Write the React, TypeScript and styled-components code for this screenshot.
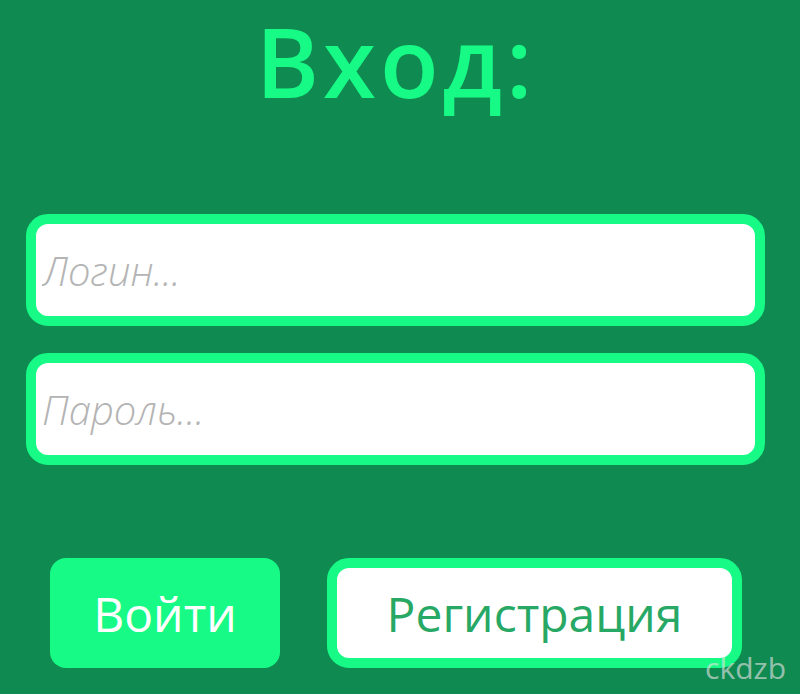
import React from "react";
import styled, { createGlobalStyle } from "styled-components";

const GlobalStyle = createGlobalStyle`
  html, body {
    margin: 0;
    padding: 0;
    background-color: #0f8a51;
  }
  body {
    font-family: "Open Sans", "Noto Sans", sans-serif;
  }
`;

const Page = styled.div`
  position: relative;
  width: 800px;
  height: 694px;
  background-color: #0f8a51;
  overflow: hidden;
`;

const Title = styled.h1`
  margin: -5px 0 0;
  padding: 0 8px 7px 0;
  text-align: center;
  font-size: 96px;
  font-weight: 600;
  line-height: 132px;
  letter-spacing: 4px;
  color: #17fb86;
`;

const Form = styled.form`
  display: flex;
  flex-direction: column;
  gap: 27px;
  width: 739px;
  margin: 80px 0 0 26px;
`;

const Field = styled.input`
  box-sizing: border-box;
  width: 100%;
  height: 112px;
  padding: 0 0 0 6px;
  border: 10px solid #17fb86;
  border-radius: 22px;
  background: #fff;
  font-family: "Open Sans", "Noto Sans", sans-serif;
  font-size: 40px;
  color: #333;
  outline: none;

  &::placeholder {
    color: #b4b4b4;
    font-style: italic;
    font-weight: 300;
  }
`;

const Buttons = styled.div`
  display: flex;
  gap: 47px;
  margin: 93px 0 0 50px;
`;

const Button = styled.button<{ $outline?: boolean }>`
  box-sizing: border-box;
  height: 110px;
  width: ${(p) => (p.$outline ? "415px" : "230px")};
  border: ${(p) => (p.$outline ? "10px solid #17fb86" : "none")};
  border-radius: ${(p) => (p.$outline ? "22px" : "16px")};
  background: ${(p) => (p.$outline ? "#fff" : "#17fb86")};
  color: ${(p) => (p.$outline ? "#27a865" : "#fff")};
  font-family: "Open Sans", "Noto Sans", sans-serif;
  font-size: 48px;
  padding: 0;
  cursor: pointer;
`;

const Watermark = styled.span`
  position: absolute;
  right: 14px;
  bottom: 6px;
  font-family: "Open Sans", "Noto Sans", sans-serif;
  font-size: 30px;
  color: rgba(225, 225, 225, 0.65);
`;

export default function App() {
  return (
    <Page>
      <GlobalStyle />
      <Title>Вход:</Title>
      <Form>
        <Field type="text" placeholder="Логин..." />
        <Field type="password" placeholder="Пароль..." />
      </Form>
      <Buttons>
        <Button type="button">Войти</Button>
        <Button type="button" $outline>
          Регистрация
        </Button>
      </Buttons>
      <Watermark>ckdzb</Watermark>
    </Page>
  );
}
